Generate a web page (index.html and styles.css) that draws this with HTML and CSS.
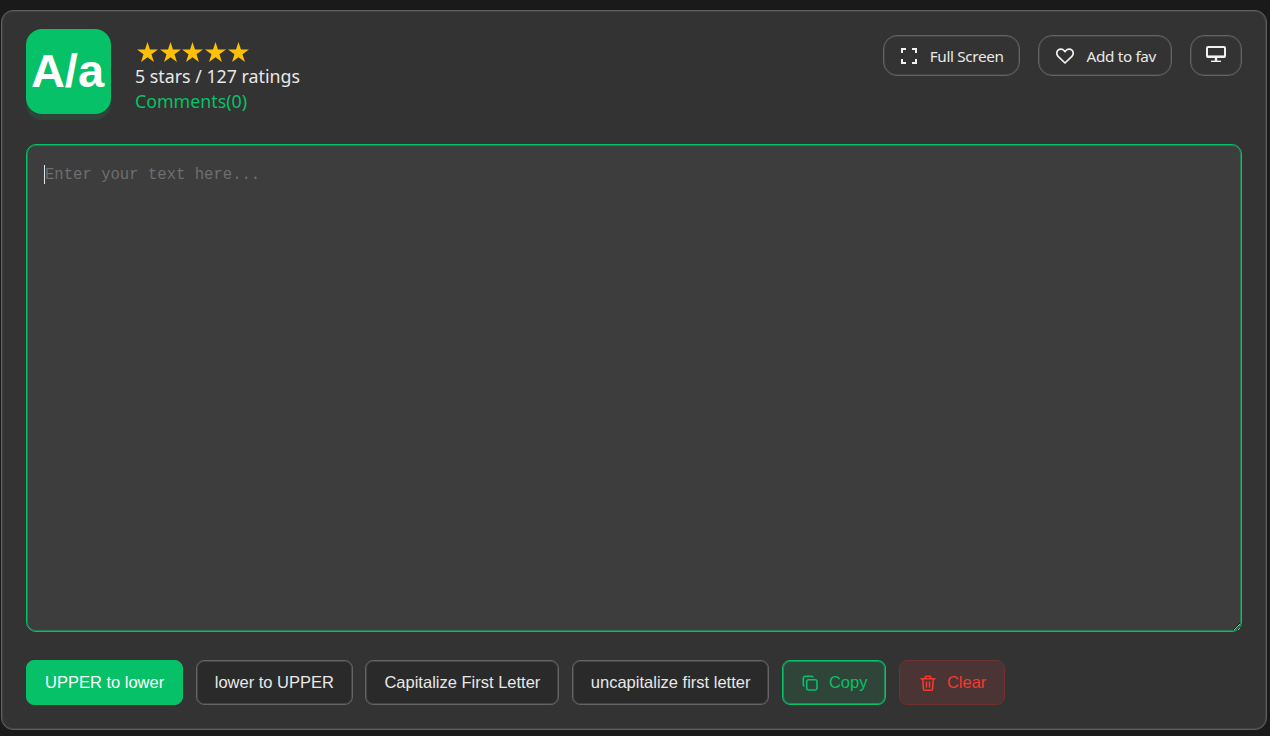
FILE: index.html
```html
<!DOCTYPE html>
<html lang="en">
<head>
<meta charset="utf-8">
<title>Case Converter</title>
<link rel="stylesheet" href="styles.css">
</head>
<body>
<main class="card">
  <header class="top">
    <div class="brand">
      <div class="logo">A/a</div>
      <div class="meta">
        <div class="stars" role="img" aria-label="5 stars">
          <svg class="star" viewBox="0 0 21 20"><path d="M10.500 0 12.970 7.600 20.960 7.600 14.490 12.300 16.970 19.900 10.500 15.200 4.030 19.900 6.510 12.300 .04 7.600 8.030 7.600z"/></svg>
          <svg class="star" viewBox="0 0 21 20"><path d="M10.500 0 12.970 7.600 20.960 7.600 14.490 12.300 16.970 19.900 10.500 15.200 4.030 19.900 6.510 12.300 .04 7.600 8.030 7.600z"/></svg>
          <svg class="star" viewBox="0 0 21 20"><path d="M10.500 0 12.970 7.600 20.960 7.600 14.490 12.300 16.970 19.900 10.500 15.200 4.030 19.900 6.510 12.300 .04 7.600 8.030 7.600z"/></svg>
          <svg class="star" viewBox="0 0 21 20"><path d="M10.500 0 12.970 7.600 20.960 7.600 14.490 12.300 16.970 19.900 10.500 15.200 4.030 19.900 6.510 12.300 .04 7.600 8.030 7.600z"/></svg>
          <svg class="star" viewBox="0 0 21 20"><path d="M10.500 0 12.970 7.600 20.960 7.600 14.490 12.300 16.970 19.900 10.500 15.200 4.030 19.900 6.510 12.300 .04 7.600 8.030 7.600z"/></svg>
        </div>
        <div class="rating">5 stars / 127 ratings</div>
        <a class="comments" href="#">Comments(0)</a>
      </div>
    </div>
    <div class="tools">
      <button class="tool">
        <svg class="tool-icon" viewBox="0 0 16 16" fill="none" stroke="currentColor" stroke-width="2"><path d="M1 5V1h4M11 1h4v4M15 11v4h-4M5 15H1v-4"/></svg>
        Full Screen
      </button>
      <button class="tool">
        <svg class="tool-icon heart" viewBox="0 0 18 16" fill="none" stroke="currentColor" stroke-width="1.700" stroke-linejoin="round"><path d="M9 15 2.100 8.300C.3 6.500.4 3.700 2.100 2.100 3.900.5 6.500.8 8 2.500l1 1.100 1-1.100c1.500-1.700 4.100-2 5.900-.4 1.700 1.600 1.800 4.400 0 6.200z"/></svg>
        Add to fav
      </button>
      <button class="tool tool-square" aria-label="Desktop">
        <svg class="monitor" viewBox="0 0 20 16" fill="none" stroke="currentColor"><rect x="1" y="1" width="18" height="10" rx="1" stroke-width="2"/><path d="M1 10.500h18" stroke-width="2.200"/><path d="M10 12v3" stroke-width="2.400"/><path d="M5 15.300h10" stroke-width="1.400"/></svg>
      </button>
    </div>
  </header>

  <div class="editor-wrap">
    <textarea class="editor" placeholder="Enter your text here..."></textarea>
    <span class="caret"></span>
  </div>

  <div class="actions">
    <button class="btn btn-primary">UPPER to lower</button>
    <button class="btn">lower to UPPER</button>
    <button class="btn">Capitalize First Letter</button>
    <button class="btn">uncapitalize first letter</button>
    <button class="btn btn-copy">
      <svg class="btn-icon" viewBox="0 0 16 16" fill="none" stroke="currentColor" stroke-width="1.600"><rect x="4.700" y="4.700" width="10.300" height="10.300" rx="2"/><path d="M11.300 2.500A1.800 1.800 0 0 0 9.500 1.300H3.300a2 2 0 0 0-2 2v6.200c0 .8.500 1.500 1.200 1.800"/></svg>
      Copy
    </button>
    <button class="btn btn-clear">
      <svg class="btn-icon" viewBox="0 0 16 16" fill="none" stroke="currentColor" stroke-width="1.600" stroke-linecap="round" stroke-linejoin="round"><path d="M1 3.700h14M5.300 3.500V2.200c0-.6.400-1 1-1h3.400c.6 0 1 .4 1 1v1.300M2.800 3.700l.6 10.300c0 .7.500 1.200 1.200 1.200h6.800c.7 0 1.200-.5 1.200-1.200l.6-10.300M6.500 7v5M9.500 7v5"/></svg>
      Clear
    </button>
  </div>
</main>
</body>
</html>
```

FILE: styles.css
```css
* { box-sizing: border-box; }

html, body { height: 100%; }

body {
  margin: 0;
  padding: 10px 3px 5px 1px;
  background: #1a1a1a;
  color: #e8e8e8;
  font-family: "Noto Sans", sans-serif;
  overflow: hidden;
}

.card {
  height: 720px;
  padding: 18px 24px 24px;
  display: flex;
  flex-direction: column;
  background: #333333;
  border: 1px solid #5f5f5f;
  box-shadow: inset 0 0 0 1px #414141;
  border-radius: 12px;
}

.top {
  height: 85px;
  display: flex;
  justify-content: space-between;
  align-items: flex-start;
}

.brand {
  display: flex;
  align-items: center;
  gap: 24px;
}

.logo {
  width: 85px;
  height: 85px;
  display: flex;
  align-items: center;
  justify-content: center;
  padding: 0 2px 2px 0;
  background: #06c167;
  border-radius: 16px;
  box-shadow: 0 6px 0 #2f4539;
  color: #fff;
  font-family: "Liberation Sans", sans-serif;
  font-size: 47px;
  font-weight: 700;
}

.meta {
  display: flex;
  flex-direction: column;
  padding-top: 8px;
}

.stars {
  height: 25px;
  padding: 4px 0 0 2px;
  display: flex;
  align-items: flex-start;
  gap: 1.700px;
}

.star {
  width: 21px;
  height: 20px;
  fill: #ffc107;
}

.rating {
  height: 25px;
  padding-top: 1px;
  font-size: 17.800px;
  line-height: 24px;
  color: #e8e8e8;
}

.comments {
  font-size: 17.800px;
  line-height: 26px;
  color: #06c167;
  text-decoration: none;
}

.tools {
  display: flex;
  gap: 18px;
  padding-top: 6px;
}

.tool {
  height: 41px;
  padding: 0 15px 0 17px;
  display: flex;
  align-items: center;
  gap: 13px;
  background: transparent;
  border: 1px solid #646464;
  box-shadow: inset 0 0 0 1px #444444;
  border-radius: 14px;
  margin: 0;
  color: #e8e8e8;
  font-family: "Noto Sans", sans-serif;
  font-size: 15.300px;
  letter-spacing: -0.350px;
}

.tool-square {
  width: 52px;
  padding: 0;
  justify-content: center;
}

.tool-icon { width: 16px; height: 16px; color: #f0f0f0; }
.heart { width: 18px; height: 16px; }
.monitor { width: 20px; height: 16px; color: #f0f0f0; margin-top: -3px; }

.editor-wrap {
  position: relative;
  margin-top: 30px;
  height: 488px;
}

.editor {
  display: block;
  width: 100%;
  height: 100%;
  padding: 18px;
  background: #3d3d3d;
  border: 1px solid #06c167;
  box-shadow: inset 0 0 0 1px #1f7f52;
  border-radius: 10px;
  outline: none;
  color: #e8e8e8;
  font-family: "Liberation Mono", monospace;
  font-size: 15.600px;
  line-height: 24px;
}

.editor::placeholder { color: #6e6e6e; opacity: 1; }

.caret {
  position: absolute;
  left: 18px;
  top: 21px;
  width: 1px;
  height: 19px;
  background: #e8e8e8;
}

.actions {
  display: flex;
  gap: 12.500px;
  margin-top: 28px;
}

.btn {
  height: 45px;
  padding: 0 18px;
  display: flex;
  align-items: center;
  background: #2a2a2a;
  border: 1px solid #646464;
  box-shadow: inset 0 0 0 1px #444444;
  border-radius: 8px;
  color: #e8e8e8;
  font-family: "Liberation Sans", sans-serif;
  font-size: 16.500px;
}

.btn-primary {
  background: #06c167;
  border-color: #06c167;
  box-shadow: none;
  color: #fff;
}

.btn-copy {
  gap: 11px;
  padding: 0 18px 0 19px;
  background: #2f4539;
  border-color: #06c167;
  box-shadow: inset 0 0 0 1px #1a8f58;
  color: #06c167;
}

.btn-clear {
  gap: 11px;
  padding: 0 18px 0 20px;
  background: #4a3534;
  border-color: #6e3230;
  box-shadow: none;
  color: #f4392f;
}

.btn-icon { width: 16px; height: 16px; }
```
